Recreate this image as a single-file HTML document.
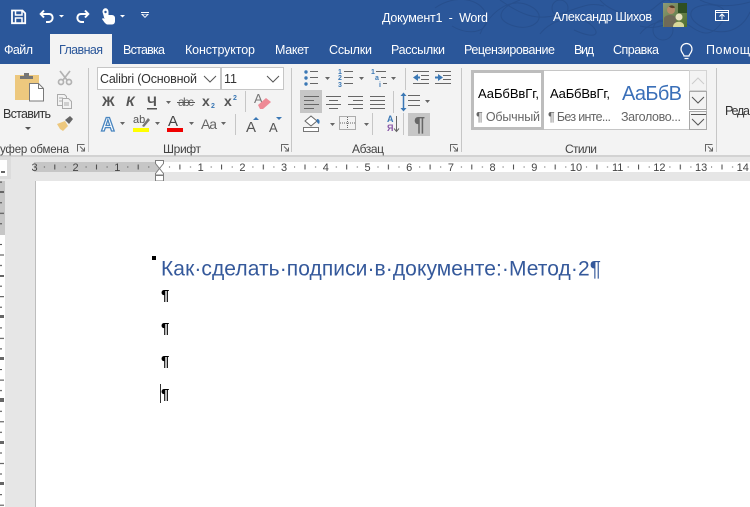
<!DOCTYPE html>
<html><head><meta charset="utf-8"><style>
html,body{margin:0;padding:0;width:750px;height:507px;overflow:hidden;background:#e6e6e6}
svg{position:absolute;left:0;top:0;display:block}
text{font-family:"Liberation Sans",sans-serif;white-space:pre}
.t{font-size:12.5px;fill:#fff}
.r{font-size:11px;fill:#444;text-anchor:middle}
.ln{stroke:#666;stroke-width:1;fill:none}
.bl{fill:#3b78b5}
</style></head><body>
<svg width="750" height="507" viewBox="0 0 750 507">
<defs>
<pattern id="rt" x="159" y="162" width="41.7" height="10" patternUnits="userSpaceOnUse">
<rect x="10" y="4.5" width="1" height="1" fill="#444"/><rect x="20.4" y="2.5" width="1" height="5" fill="#444"/><rect x="31" y="4.5" width="1" height="1" fill="#444"/>
</pattern>
<pattern id="lt" x="0" y="235" width="5" height="41.7" patternUnits="userSpaceOnUse">
<rect x="0" y="9" width="2" height="1" fill="#444"/><rect x="0" y="19.5" width="4" height="1" fill="#444"/><rect x="0" y="30" width="2" height="1" fill="#444"/>
</pattern>
<clipPath id="c1"><rect x="620" y="75" width="61" height="50"/></clipPath>
<clipPath id="c2"><rect x="0" y="140" width="72" height="16"/></clipPath>
<linearGradient id="av" x1="0" y1="0" x2="1" y2="1"><stop offset="0" stop-color="#8d9a78"/><stop offset="1" stop-color="#4e6f2c"/></linearGradient>
</defs>

<rect width="750" height="64" fill="#2b579a"/>
<g fill="none" stroke="#274f8d" stroke-width="1">
<path d="M435 8C455 -6 480 -2 486 14S472 38 452 26M480 34C490 12 510 -4 530 6S534 32 514 26 498 8 520 0"/>
<path d="M540 34C552 18 578 14 590 24S596 40 574 30M600 0C612 14 640 20 654 8S668 -2 676 8 660 32 640 26"/>
<path d="M640 34C650 20 676 16 690 26S712 36 722 22 716 2 700 6 690 24 710 30 744 26 750 12"/>
<path d="M500 0C520 14 536 22 560 14S590 2 604 6M700 0C712 6 730 8 750 2"/>
<circle cx="663" cy="30" r="10"/><circle cx="560" cy="8" r="8"/>
</g>
<rect x="50" y="34" width="62" height="30" fill="#f3f3f3"/>
<rect y="64" width="750" height="92" fill="#f3f3f3"/>
<rect y="155" width="750" height="2" fill="#d2d2d2"/>
<rect y="157" width="750" height="350" fill="#e6e6e6"/>

<rect x="0" y="157" width="11" height="22" fill="#dcdcdc"/>
<rect x="0" y="160" width="7" height="16" fill="#fff"/>
<rect x="1" y="171" width="4" height="2" fill="#666"/>

<rect x="34" y="162" width="125" height="10" fill="#c6c6c6"/>
<rect x="159" y="162" width="591" height="10" fill="#fff"/>
<rect x="34" y="162" width="716" height="10" fill="url(#rt)"/>
<text class="r" x="34.500" y="171">3</text><text class="r" x="75.500" y="171">2</text><text class="r" x="117.300" y="171">1</text>
<text class="r" x="200.700" y="171">1</text><text class="r" x="242.400" y="171">2</text><text class="r" x="284.100" y="171">3</text><text class="r" x="325.800" y="171">4</text><text class="r" x="367.500" y="171">5</text><text class="r" x="409.200" y="171">6</text><text class="r" x="450.900" y="171">7</text><text class="r" x="492.600" y="171">8</text><text class="r" x="534.300" y="171">9</text><text class="r" x="576" y="171">10</text><text class="r" x="617.700" y="171">11</text><text class="r" x="659.400" y="171">12</text><text class="r" x="701.100" y="171">13</text><text class="r" x="742.800" y="171">14</text>
<g fill="#fff" stroke="#7d7d7d" stroke-width="1">
<path d="M155.500 160.500h8v3l-4 5-4-5z"/>
<path d="M159.500 168.500l4 5v1.500h-8v-1.500z"/>
<rect x="155.500" y="175.500" width="8" height="5.500"/>
</g>

<rect x="0" y="181" width="5" height="54" fill="#c6c6c6"/>
<rect x="0" y="235" width="5" height="272" fill="#fff"/>
<rect x="0" y="181" width="5" height="326" fill="url(#lt)"/>
<g fill="#666">
<rect x="0" y="191" width="4" height="2"/>
<rect x="0" y="275" width="4" height="2"/><rect x="0" y="315" width="4" height="3"/><rect x="0" y="357" width="4" height="3"/><rect x="0" y="398" width="4" height="4"/><rect x="0" y="441" width="4" height="3"/><rect x="0" y="482" width="4" height="3"/>
</g>

<rect x="35" y="181" width="1" height="326" fill="#bdbdbd"/>
<rect x="36" y="181" width="714" height="326" fill="#fff"/>

<!-- QAT -->
<g fill="none" stroke="#fff" stroke-width="1.8">
<path d="M12 10.500h10.500l2.700 2.700v10h-13.200z"/>
<path d="M15.500 11v4h6.500v-4M15.500 23v-5h6.500v5" stroke-width="1.500"/>
<path d="M44 10.500l-3.300 3.500 3.300 3.500M41 14h8c5 0 5 8-1 8h-2" stroke-width="2"/>
<path d="M85 10.500l3.300 3.500-3.300 3.500M88 14h-7c-5 0-5 8 1 8h2" stroke-width="2"/>
</g>
<path d="M59 15h5l-2.500 2.500zM120 15h5l-2.500 2.500zM141 14h8l-4 4zM141 12h8v1h-8z" fill="#fff"/>
<path d="M143 14.500h4l-2 2.200z" fill="#2b579a"/>
<path d="M102.500 12c0-5 6-5 6 0v3h3c2 0 3.500 1 3.500 3v3c0 2-1 3.500-3 3.500h-4.500c-1 0-2-1-3-2l-2.500-3.500 1-1 1.500 1z" fill="#fff"/>
<circle cx="105.500" cy="12" r="1.200" fill="#2b579a"/>

<text class="t" x="382" y="22" textLength="106">Документ1  -  Word</text>
<text class="t" x="553" y="21" textLength="99">Александр Шихов</text>
<rect x="663" y="3" width="24" height="24" fill="url(#av)"/>
<rect x="678" y="3" width="9" height="10" fill="#2f4f22"/>
<circle cx="671" cy="10" r="4" fill="#b58a68"/>
<path d="M669 6.500c2-2 5-1 6 1-2 1-4 1-6-1z" fill="#5a3d28"/>
<path d="M664 27v-9c2-4 10-4 12 0v9z" fill="#6f6a58"/>
<circle cx="679" cy="17" r="3.500" fill="#e8e2c0"/>
<path d="M673 27c0-6 9-7 11-2v2z" fill="#d8d89a"/>
<g fill="none" stroke="#fff"><rect x="715.500" y="10.500" width="13" height="10"/><path d="M716 12.500h12"/><path d="M722 19.500v-5M719.500 16.500l2.500-2.500 2.500 2.500"/></g>

<text class="t" x="4" y="54" textLength="29">Файл</text>
<text x="59" y="54" font-size="12.500" fill="#2b579a" textLength="44">Главная</text>
<text class="t" x="123" y="54" textLength="42">Вставка</text>
<text class="t" x="185" y="54" textLength="70">Конструктор</text>
<text class="t" x="275" y="54" textLength="34">Макет</text>
<text class="t" x="329" y="54" textLength="43">Ссылки</text>
<text class="t" x="391" y="54" textLength="54">Рассылки</text>
<text class="t" x="464" y="54" textLength="91">Рецензирование</text>
<text class="t" x="574" y="54" textLength="20">Вид</text>
<text class="t" x="613" y="54" textLength="46">Справка</text>
<text class="t" x="706" y="54" textLength="44">Помощ</text>
<path d="M684 56c0-2-3-3-3-7a5.500 5.500 0 0 1 11 0c0 4-3 5-3 7zM684.500 58.500h4" fill="none" stroke="#fff" stroke-width="1.200"/>

<g fill="#c6c6c6"><rect x="88" y="68" width="1" height="84"/><rect x="291" y="68" width="1" height="84"/><rect x="461" y="68" width="1" height="84"/><rect x="716" y="68" width="1" height="84"/></g>

<rect x="15" y="75" width="24" height="25" fill="#edc87e"/>
<path d="M20 79v-3h4v-3h5v3h4v3z" fill="#767676"/>
<path d="M29.500 83.500h9l5 5v12.500h-14z" fill="#fff" stroke="#7a7a7a"/>
<path d="M38.500 83.500v5h5" fill="none" stroke="#7a7a7a"/>
<text x="3" y="118" font-size="12.500" fill="#333" textLength="48">Вставить</text>
<path d="M25 127h6l-3 3z" fill="#555"/>
<g fill="none" stroke="#b2b2b2" stroke-width="1.700"><circle cx="61" cy="82" r="2.500"/><circle cx="69" cy="82" r="2.500"/><path d="M60 71l7 9M70 71l-7 9"/></g>
<g fill="#f3f3f3" stroke="#ababab"><path d="M57.500 94.500h7l2 2v9h-9z"/><path d="M62.500 98.500h6l3 3v7h-9z"/></g>
<path d="M59 98h4M59 101h3M64 103h5M64 105h5" stroke="#ababab"/>
<path d="M57 124l8-3 3 5-5 5-3-2z" fill="#edc87e"/><path d="M65 120l5-4 3 3-4 5z" fill="#666"/>

<text x="0" y="153" font-size="11.500" fill="#444" textLength="69" clip-path="url(#c2)">уфер обмена</text>
<g fill="none" stroke="#666">
<path d="M77.500 151.500v-7h7"/><path d="M80 146.500l4 4M84.500 147.500v3.500h-3.500"/>
<path d="M281.500 151.500v-7h7"/><path d="M284 146.500l4 4M288.500 147.500v3.500h-3.500"/>
<path d="M450.500 151.500v-7h7"/><path d="M453 146.500l4 4M457.500 147.500v3.500h-3.500"/>
<path d="M705.500 151.500v-7h7"/><path d="M708 146.500l4 4M712.500 147.500v3.500h-3.500"/>
</g>

<rect x="97.500" y="67.500" width="123" height="22" fill="#fff" stroke="#c6c6c6"/>
<rect x="221.500" y="67.500" width="62" height="22" fill="#fff" stroke="#c6c6c6"/>
<text x="100" y="83" font-size="12.500" fill="#333" textLength="97">Calibri (Основной</text>
<text x="224" y="83" font-size="12.500" fill="#333">11</text>
<path d="M204 76l6 6 6-6M267 76l6 6 6-6" fill="none" stroke="#555"/>

<text x="102" y="106" font-size="14" font-weight="bold" fill="#555" textLength="12">Ж</text>
<text x="126" y="106" font-size="14" font-weight="bold" font-style="italic" fill="#555">К</text>
<text x="147" y="106" font-size="14" font-weight="bold" fill="#555">Ч</text>
<text x="178" y="106" font-size="12" fill="#666" textLength="16">abc</text>
<text x="202" y="106" font-size="14" font-weight="bold" fill="#555">x</text>
<text x="224" y="106" font-size="14" font-weight="bold" fill="#555">x</text>
<text x="211" y="108" font-size="7" font-weight="bold" fill="#3b78b5">2</text>
<text x="233" y="100" font-size="7" font-weight="bold" fill="#3b78b5">2</text>
<rect x="147" y="108" width="10" height="1.500" fill="#555"/>
<rect x="177" y="102" width="18" height="1" fill="#555"/>
<path d="M166 101h5l-2.500 3zM120 122h5l-2.500 3zM155 122h5l-2.500 3zM189 122h5l-2.500 3zM221 122h5l-2.500 3z" fill="#666"/>
<rect x="245" y="91" width="1" height="21" fill="#c6c6c6"/>
<rect x="235" y="114" width="1" height="21" fill="#c6c6c6"/>
<text x="254" y="103" font-size="13" fill="#777">A</text>
<path d="M258 105l8-7 5 4-8 7h-3z" fill="#ee8a96"/>
<text x="101" y="131" font-size="19" font-weight="bold" fill="#fff" stroke="#4a86c0" stroke-width="1.300">A</text>
<text x="133" y="123" font-size="11" fill="#555">ab</text>
<path d="M142 126l6-8 2 2-6 7z" fill="#777"/>
<rect x="133" y="128" width="16" height="4" fill="#ffff00"/>
<text x="168" y="126" font-size="15" fill="#444" textLength="14">A</text>
<rect x="167" y="128" width="16" height="4" fill="#f00000"/>
<text x="201" y="129" font-size="14" fill="#666" textLength="16">Aa</text>
<text x="246" y="132" font-size="15" fill="#555">A</text>
<path d="M253 120l3-3 3 3z" class="bl"/>
<text x="269" y="132" font-size="13" fill="#555">A</text>
<path d="M276 117h6l-3 3z" class="bl"/>

<circle class="bl" cx="306" cy="72" r="1.700"/><circle class="bl" cx="306" cy="78" r="1.700"/><circle class="bl" cx="306" cy="84" r="1.700"/>
<path d="M310 71.500h8M310 77.500h8M310 83.500h8M344 71.500h9M344 77.500h9M344 83.500h9M376 71.500h10M381 77.500h5M383 83.500h4" stroke="#666" fill="none"/>
<text class="bl" x="338" y="74" font-size="7" font-weight="bold">1</text><text class="bl" x="338" y="80" font-size="7" font-weight="bold">2</text><text class="bl" x="338" y="87" font-size="7" font-weight="bold">3</text><text class="bl" x="371" y="74" font-size="7" font-weight="bold">1</text><text class="bl" x="375" y="80" font-size="7" font-weight="bold">a</text><text class="bl" x="379" y="87" font-size="7" font-weight="bold">i</text>
<path d="M325 77h5l-2.500 3zM359 77h5l-2.500 3zM391 77h5l-2.500 3zM425 100h5l-2.500 3zM330 123h5l-2.500 3zM364 123h5l-2.500 3z" fill="#666"/>
<rect x="405" y="68" width="1" height="22" fill="#c6c6c6"/>
<path d="M413 71.500h16M421 75.500h8M421 79.500h8M413 83.500h16M435 71.500h16M443 75.500h8M443 79.500h8M435 83.500h16" stroke="#666" fill="none"/>
<path d="M413 77.500l5-3.500v2.500h2v2h-2v2.500zM443 77.500l-5-3.500v2.500h-3v2h3v2.500z" class="bl"/>
<rect x="300" y="90" width="22" height="23" fill="#c6c6c6"/>
<rect x="408" y="113" width="22" height="23" fill="#c6c6c6"/>
<rect x="393" y="91" width="1" height="22" fill="#c6c6c6"/>
<path d="M304 96.500h15M304 100.500h10M304 104.500h15M304 108.500h10" class="ln"/>
<path d="M326 96.500h15M329 100.500h9M326 104.500h15M329 108.500h9" class="ln"/>
<path d="M348 96.500h15M353 100.500h10M348 104.500h15M353 108.500h10" class="ln"/>
<path d="M370 96.500h15M370 100.500h15M370 104.500h15M370 108.500h15" class="ln"/>
<path d="M408 95.500h12M408 100.500h12M408 105.500h12" class="ln"/>
<path d="M403.500 94v16" stroke="#3b78b5" stroke-width="1.500"/>
<path d="M400.500 96l3-3.500 3 3.500zM400.500 108l3 3.500 3-3.500z" class="bl"/>
<rect x="303.500" y="127.500" width="15" height="4" fill="#fff" stroke="#777"/>
<path d="M305 121l6-5 6 5-6 5z" fill="#fff" stroke="#666"/><path d="M317 119c3 0 3 3 2 5-2-1-3-3-2-5z" class="bl"/>
<rect x="339.500" y="116.500" width="16" height="13" fill="none" stroke="#666" stroke-dasharray="1 1"/>
<path d="M347.500 117v12M340 123h15" stroke="#666" stroke-dasharray="1 1"/>
<rect x="372" y="113" width="1" height="22" fill="#c6c6c6"/>
<rect x="403" y="113" width="1" height="22" fill="#c6c6c6"/>
<text x="387" y="122" font-size="9" font-weight="bold" fill="#3b78b5">A</text>
<text x="387" y="131" font-size="9" font-weight="bold" fill="#8a5aa8">Я</text>
<path d="M396.500 116v15M394 128.500l2.500 3 2.500-3" stroke="#666" fill="none"/>
<text x="414" y="131" font-size="20" font-weight="bold" fill="#666">¶</text>

<text x="163" y="153" font-size="12" fill="#444" textLength="38">Шрифт</text>
<text x="352" y="153" font-size="12" fill="#444" textLength="32">Абзац</text>
<text x="565" y="153" font-size="12" fill="#444" textLength="32">Стили</text>

<rect x="471.500" y="70.500" width="235" height="59" fill="#fff" stroke="#c6c6c6"/>
<rect x="472.500" y="71.500" width="70" height="57" fill="#fff" stroke="#bdbdbd" stroke-width="3"/>
<text x="478" y="98" font-size="13" fill="#000" textLength="61">АаБбВвГг,</text>
<text x="476" y="121" font-size="12.500" fill="#666" textLength="64">¶ Обычный</text>
<text x="550" y="98" font-size="13" fill="#000" textLength="60">АаБбВвГг,</text>
<text x="548" y="121" font-size="12.500" fill="#666" textLength="63">¶ Без инте...</text>
<text x="622" y="100" font-size="20" fill="#3a6fb8" textLength="70" clip-path="url(#c1)">АаБбВв</text>
<text x="621" y="121" font-size="12.500" fill="#666" textLength="60">Заголово...</text>
<rect x="689.500" y="70.500" width="17" height="20" fill="#f3f3f3" stroke="#d4d4d4"/>
<rect x="689.500" y="91.500" width="17" height="18" fill="#f3f3f3" stroke="#a8a8a8"/>
<rect x="689.500" y="111.500" width="17" height="18" fill="#f3f3f3" stroke="#a8a8a8"/>
<path d="M692 84l6-6 6 6" fill="none" stroke="#ccc"/>
<path d="M692 97l6 6 6-6" fill="none" stroke="#555"/>
<path d="M691 114.500h15M692 119l6 6 6-6" fill="none" stroke="#555"/>
<text x="725" y="115" font-size="12.500" fill="#333" textLength="25">Реда</text>

<rect x="152" y="256" width="4" height="4" fill="#000"/>
<text x="161" y="275.500" font-size="21" fill="#35599b" textLength="440">Как·сделать·подписи·в·документе:·Метод·2¶</text>
<text x="161" y="300" font-size="15" font-weight="bold" fill="#000">¶</text>
<text x="161" y="333" font-size="15" font-weight="bold" fill="#000">¶</text>
<text x="161" y="366" font-size="15" font-weight="bold" fill="#000">¶</text>
<text x="161" y="399" font-size="15" font-weight="bold" fill="#000">¶</text>
<rect x="160" y="384" width="1" height="19" fill="#333"/>
</svg>
</body></html>
